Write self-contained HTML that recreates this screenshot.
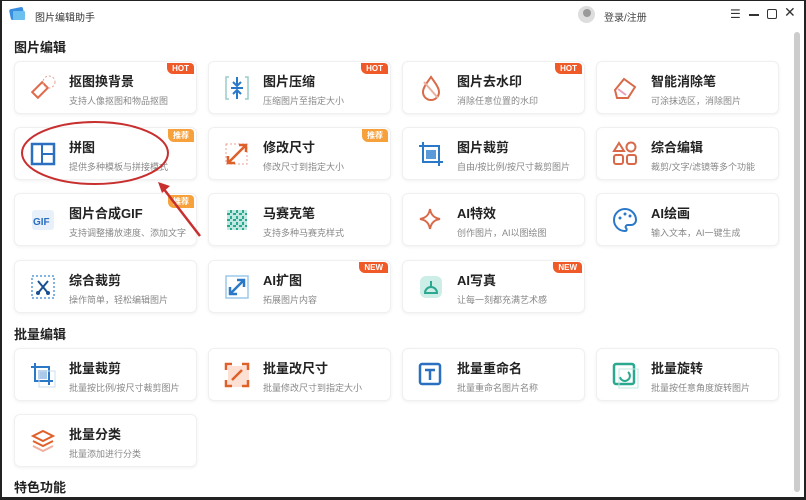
<!DOCTYPE html><html><head><meta charset="utf-8"><style>
*{margin:0;padding:0;box-sizing:border-box}
body{width:806px;height:500px;overflow:hidden;background:#fff;font-family:"Liberation Sans","Noto Sans CJK SC",sans-serif;position:relative}
.frame{position:absolute;inset:0;border:2px solid #222;border-top-width:1px;border-bottom-width:3px}
.a{position:absolute}
.h{font-size:13px;font-weight:bold;color:#222}
.c{position:absolute;width:183px;height:53px;border:1px solid #f0f0f0;border-radius:6px;box-shadow:0 1px 3px rgba(0,0,0,.06);background:#fff}
.c .t{position:absolute;left:54px;top:9px;font-size:13px;font-weight:bold;color:#222}
.c .s{position:absolute;left:54px;top:32px;font-size:9px;color:#888;white-space:nowrap}
.c svg{position:absolute;left:14px;top:12px}
.b{position:absolute;right:2px;top:1px;font-size:8px;color:#fff;font-weight:bold;padding:1px 5px;border-radius:0 4px 0 6px;background:#ef5a28}
.b.y{background:#f6a13c}
</style></head><body>
<div class="frame"></div>
<svg class="a" style="left:8px;top:5px" width="20" height="18"><rect x="2" y="3" width="14" height="11" rx="2" fill="#3a8ee0" transform="rotate(-12 9 9)"/><rect x="5" y="6" width="12" height="9" rx="1" fill="#6cc0f0"/></svg>
<div class="a" style="left:35px;top:9px;font-size:10px;color:#333">图片编辑助手</div>
<div class="a" style="left:578px;top:6px;width:17px;height:17px;border-radius:50%;background:#ddd;overflow:hidden"><div style="margin:3px auto 0;width:8px;height:8px;border-radius:50%;background:#999"></div></div>
<div class="a" style="left:604px;top:9px;font-size:10px;color:#444">登录/注册</div>
<div class="a" style="left:730px;top:7px;font-size:12px;color:#333">☰</div>
<div class="a" style="left:749px;top:14px;width:10px;height:1.5px;background:#333"></div>
<div class="a" style="left:767px;top:9px;width:10px;height:10px;border:1.5px solid #333;border-radius:2px"></div>
<div class="a" style="left:784px;top:4px;font-size:14px;color:#333">✕</div>
<div class="a" style="left:794px;top:32px;width:6px;height:460px;background:#ccc;border-radius:3px"></div>
<div class="a h" style="left:14px;top:37px">图片编辑</div>
<div class="a h" style="left:14px;top:324px">批量编辑</div>
<div class="a h" style="left:14px;top:477px">特色功能</div>

<div class="c" style="left:14px;top:61px"><span class="b">HOT</span><svg width="28" height="28"><rect x="4" y="12" width="14" height="8" transform="rotate(-45 11 16)" fill="none" stroke="#e06a4a" stroke-width="2"/><circle cx="20" cy="8" r="6" fill="none" stroke="#e8a090" stroke-dasharray="2 2"/></svg><div class="t">抠图换背景</div><div class="s">支持人像抠图和物品抠图</div></div>
<div class="c" style="left:208px;top:61px"><span class="b">HOT</span><svg width="28" height="28"><path d="M6 3H3v22h3M22 3h3v22h-3" stroke="#9cc" fill="none" stroke-width="1.5"/><path d="M14 3v9M10 8l4 4 4-4M14 25v-9M10 20l4-4 4 4M8 14h12" stroke="#2a78c8" fill="none" stroke-width="2"/></svg><div class="t">图片压缩</div><div class="s">压缩图片至指定大小</div></div>
<div class="c" style="left:402px;top:61px"><span class="b">HOT</span><svg width="28" height="28"><path d="M14 3C9 10 6 14 6 18a8 8 0 0016 0c0-4-3-8-8-15z" fill="none" stroke="#d86a4a" stroke-width="2"/><path d="M7 8l14 16" stroke="#e8b0a0" stroke-width="2"/></svg><div class="t">图片去水印</div><div class="s">消除任意位置的水印</div></div>
<div class="c" style="left:596px;top:61px"><svg width="28" height="28"><path d="M4 16l9-11 11 8-7 11H6z" fill="none" stroke="#d86a4a" stroke-width="2"/><path d="M7 15l8 6" stroke="#e8a0c0" stroke-width="2"/></svg><div class="t">智能消除笔</div><div class="s">可涂抹选区，消除图片</div></div>

<div class="c" style="left:14px;top:127px"><span class="b y">推荐</span><svg width="28" height="28"><rect x="3" y="4" width="22" height="20" fill="none" stroke="#2a6fc0" stroke-width="2.5"/><path d="M13 4v20M13 14h12" stroke="#2a6fc0" stroke-width="2"/></svg><div class="t">拼图</div><div class="s">提供多种模板与拼接模式</div></div>
<div class="c" style="left:208px;top:127px"><span class="b y">推荐</span><svg width="28" height="28"><rect x="3" y="4" width="21" height="20" fill="none" stroke="#e8a090" stroke-dasharray="2 2"/><path d="M5 23L23 5M16 5h7v7M5 16v7h7" stroke="#e0602a" fill="none" stroke-width="2.5"/></svg><div class="t">修改尺寸</div><div class="s">修改尺寸到指定大小</div></div>
<div class="c" style="left:402px;top:127px"><svg width="28" height="28"><path d="M6 2v20h20M2 6h20v20" stroke="#2a78c8" fill="none" stroke-width="2"/><rect x="9" y="10" width="10" height="9" fill="#5a9ad8"/></svg><div class="t">图片裁剪</div><div class="s">自由/按比例/按尺寸裁剪图片</div></div>
<div class="c" style="left:596px;top:127px"><svg width="28" height="28"><path d="M8 3l5 8H3z" fill="none" stroke="#d86a4a" stroke-width="2"/><circle cx="20" cy="7" r="4.5" fill="none" stroke="#d86a4a" stroke-width="2"/><rect x="3" y="15" width="9" height="9" rx="2" fill="none" stroke="#d86a4a" stroke-width="2"/><rect x="16" y="15" width="9" height="9" rx="2" fill="none" stroke="#d86a4a" stroke-width="2"/></svg><div class="t">综合编辑</div><div class="s">裁剪/文字/滤镜等多个功能</div></div>

<div class="c" style="left:14px;top:193px"><span class="b y">推荐</span><svg width="28" height="28"><rect x="3" y="4" width="22" height="20" rx="3" fill="#e8f0fa"/><text x="4" y="19" font-size="10" font-weight="bold" fill="#2a6fc0" font-family="Liberation Sans">GIF</text></svg><div class="t">图片合成GIF</div><div class="s">支持调整播放速度、添加文字</div></div>
<div class="c" style="left:208px;top:193px"><svg width="28" height="28"><rect x="4" y="4" width="20" height="20" fill="#bfe8e0"/><path d="M4 8h20M4 14h20M4 20h20M8 4v20M14 4v20M20 4v20" stroke="#2aa890" stroke-width="2" stroke-dasharray="3 3"/></svg><div class="t">马赛克笔</div><div class="s">支持多种马赛克样式</div></div>
<div class="c" style="left:402px;top:193px"><svg width="28" height="28"><path d="M13 3c1 6 4 9 10 10-6 1-9 4-10 10-1-6-4-9-10-10 6-1 9-4 10-10z" fill="none" stroke="#d86a4a" stroke-width="2"/></svg><div class="t">AI特效</div><div class="s">创作图片，AI以图绘图</div></div>
<div class="c" style="left:596px;top:193px"><svg width="28" height="28"><path d="M14 3a11 11 0 100 22c2 0 2-2 1-3s0-3 2-3h3a5 5 0 005-5C25 8 20 3 14 3z" fill="none" stroke="#2a78c8" stroke-width="2"/><circle cx="9" cy="12" r="1.5" fill="#2a78c8"/><circle cx="14" cy="8" r="1.5" fill="#2a78c8"/><circle cx="19" cy="10" r="1.5" fill="#2a78c8"/></svg><div class="t">AI绘画</div><div class="s">输入文本，AI一键生成</div></div>

<div class="c" style="left:14px;top:260px"><svg width="28" height="28"><rect x="3" y="3" width="22" height="22" fill="none" stroke="#5a9ad8" stroke-dasharray="2 2" stroke-width="1.5"/><path d="M9 8l10 12M19 8L9 20" stroke="#1a4f90" stroke-width="2"/><circle cx="9" cy="20" r="2" fill="#1a4f90"/><circle cx="19" cy="20" r="2" fill="#1a4f90"/></svg><div class="t">综合裁剪</div><div class="s">操作简单，轻松编辑图片</div></div>
<div class="c" style="left:208px;top:260px"><span class="b">NEW</span><svg width="28" height="28"><rect x="3" y="3" width="22" height="22" fill="none" stroke="#9cc8e8" stroke-width="1.5"/><path d="M7 21L21 7M14 7h7v7M7 14v7h7" stroke="#2a78c8" fill="none" stroke-width="2.5"/></svg><div class="t">AI扩图</div><div class="s">拓展图片内容</div></div>
<div class="c" style="left:402px;top:260px"><span class="b">NEW</span><svg width="28" height="28"><rect x="3" y="3" width="22" height="22" rx="6" fill="#cdeee6"/><path d="M8 20a6 6 0 0112 0zM14 8v6" stroke="#2aa890" fill="none" stroke-width="2"/></svg><div class="t">AI写真</div><div class="s">让每一刻都充满艺术感</div></div>

<div class="c" style="left:14px;top:348px"><svg width="28" height="28"><path d="M6 2v18h18M2 6h18v18" stroke="#2a78c8" fill="none" stroke-width="2"/><rect x="9" y="9" width="9" height="9" fill="#aac8ea"/><rect x="10" y="10" width="16" height="16" fill="none" stroke="#cde" stroke-width="1"/></svg><div class="t">批量裁剪</div><div class="s">批量按比例/按尺寸裁剪图片</div></div>
<div class="c" style="left:208px;top:348px"><svg width="28" height="28"><rect x="5" y="5" width="21" height="21" fill="#fde0d4"/><path d="M3 9V3h6M25 9V3h-6M3 19v6h6M25 19v6h-6M9 19l10-10" stroke="#e0602a" fill="none" stroke-width="2.5"/></svg><div class="t">批量改尺寸</div><div class="s">批量修改尺寸到指定大小</div></div>
<div class="c" style="left:402px;top:348px"><svg width="28" height="28"><rect x="3" y="3" width="20" height="20" rx="2" fill="none" stroke="#2a6fc0" stroke-width="2.5"/><path d="M8 9h10M13 9v10" stroke="#2a6fc0" stroke-width="2.5"/></svg><div class="t">批量重命名</div><div class="s">批量重命名图片名称</div></div>
<div class="c" style="left:596px;top:348px"><svg width="28" height="28"><rect x="3" y="3" width="20" height="20" rx="2" fill="none" stroke="#2aa890" stroke-width="2.5"/><path d="M9 16a5 5 0 108-5" stroke="#2aa890" fill="none" stroke-width="2"/><rect x="8" y="8" width="19" height="19" fill="none" stroke="#bfe8e0"/></svg><div class="t">批量旋转</div><div class="s">批量按任意角度旋转图片</div></div>

<div class="c" style="left:14px;top:414px"><svg width="28" height="28"><path d="M14 4l10 5-10 5-10-5z" fill="none" stroke="#e0602a" stroke-width="2"/><path d="M4 14l10 5 10-5" fill="none" stroke="#e0602a" stroke-width="2"/><path d="M4 19l10 5 10-5" fill="none" stroke="#f0b0a0" stroke-width="2"/></svg><div class="t">批量分类</div><div class="s">批量添加进行分类</div></div>

<svg class="a" style="left:0;top:0" width="806" height="500"><ellipse cx="95" cy="153" rx="73" ry="31" fill="none" stroke="#c83030" stroke-width="2"/><path d="M200 236L163 188" stroke="#c83030" stroke-width="2.5"/><path d="M158 182l12 4-8 7z" fill="#c83030"/></svg>
</body></html>
